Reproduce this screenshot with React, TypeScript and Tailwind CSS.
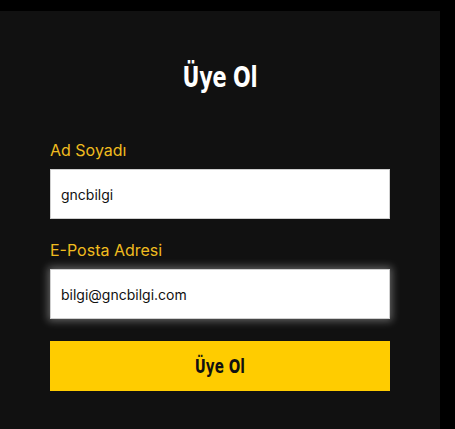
import React, { useState } from "react";

const condensed = "font-['DejaVu_Sans',sans-serif] font-bold";

export default function App() {
  const [name, setName] = useState<string>("gncbilgi");
  const [email, setEmail] = useState<string>("bilgi@gncbilgi.com");

  return (
    <div className="min-h-[429px] w-[455px] bg-black pt-[11px]">
      <div className="min-h-[418px] w-[440px] bg-[#111111] px-[50px] pt-[46px] font-['Inter',sans-serif]">
        <h1 className={`${condensed} text-center text-[29px] text-white leading-[40px]`}>
          <span className="inline-block scale-x-[0.72] tracking-[-0.5px]">Üye Ol</span>
        </h1>

        <div className="mt-[43px] flex flex-col">
          <label className="text-[16px] leading-[20px] text-[#f0bc1f]">Ad Soyadı</label>
          <input
            type="text"
            value={name}
            onChange={(e) => setName(e.target.value)}
            className="mt-[9px] h-[50px] w-full border border-[#cfcfcf] bg-white px-[10px] text-[14px] text-[#111] outline-none"
          />

          <label className="mt-[21px] text-[16px] leading-[20px] text-[#f0bc1f]">E-Posta Adresi</label>
          <input
            type="email"
            value={email}
            onChange={(e) => setEmail(e.target.value)}
            className="mt-[9px] h-[50px] w-full border border-[#cfcfcf] bg-white px-[10px] text-[14px] text-[#111] outline-none shadow-[0_0_8px_2px_rgba(255,255,255,0.35)]"
          />

          <button className={`${condensed} mt-[22px] h-[50px] w-full bg-[#ffcc00] text-[20px] text-[#111]`}>
            <span className="inline-block scale-x-[0.68]">Üye Ol</span>
          </button>
        </div>
      </div>
    </div>
  );
}
